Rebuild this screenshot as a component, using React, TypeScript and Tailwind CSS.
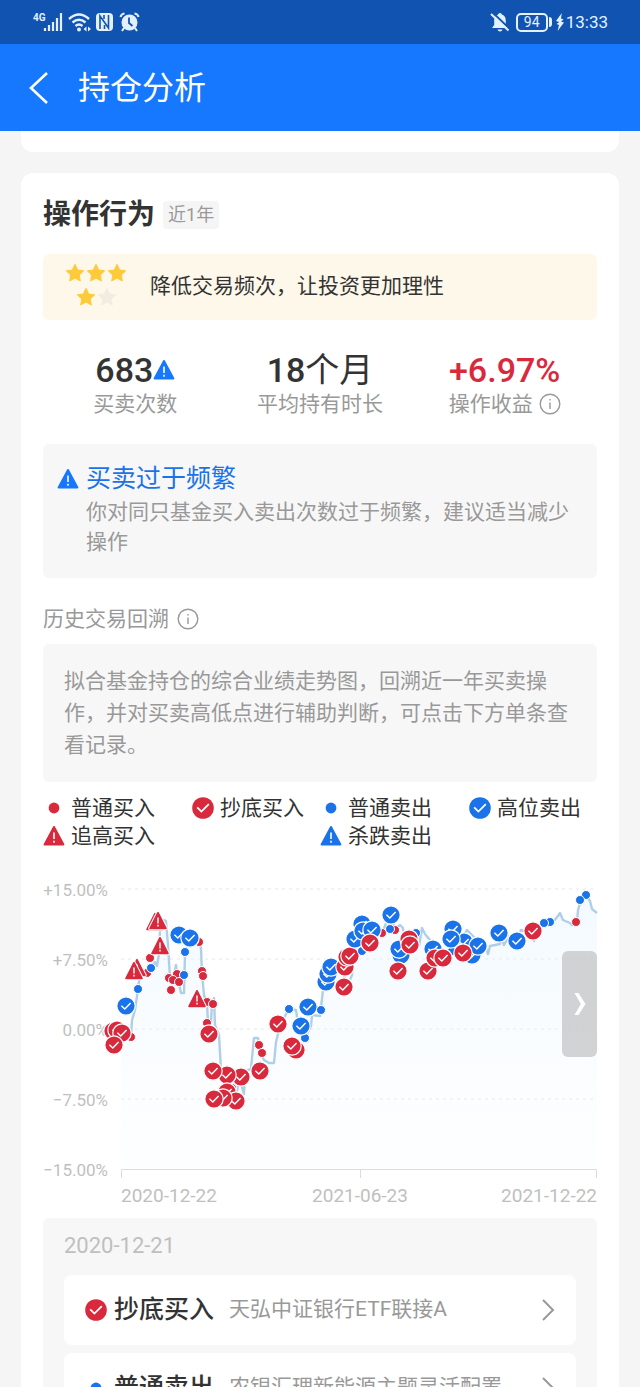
import { useState } from 'react';
import clsx from 'clsx';

type Kind = 'dot' | 'check' | 'warn';
type Side = 'buy' | 'sell';
type Mark = [Kind, Side, number, number];

const COLORS: Record<Side, string> = { buy: '#d9293d', sell: '#1a73e8' };

const legend: { kind: Kind; side: Side; label: string; className?: string }[] = [
  { kind: 'dot', side: 'buy', label: '普通买入' },
  { kind: 'check', side: 'buy', label: '抄底买入' },
  { kind: 'dot', side: 'sell', label: '普通卖出' },
  { kind: 'check', side: 'sell', label: '高位卖出' },
  { kind: 'warn', side: 'buy', label: '追高买入' },
  { kind: 'warn', side: 'sell', label: '杀跌卖出', className: 'col-start-3' },
];

const records: { kind: Kind; side: Side; label: string; fund: string }[] = [
  { kind: 'check', side: 'buy', label: '抄底买入', fund: '天弘中证银行ETF联接A' },
  { kind: 'dot', side: 'sell', label: '普通卖出', fund: '农银汇理新能源主题灵活配置' },
];

const yTicks = [
  { label: '+15.00%', y: 19 },
  { label: '+7.50%', y: 89 },
  { label: '0.00%', y: 159 },
  { label: '−7.50%', y: 229 },
  { label: '−15.00%', y: 299 },
];

const linePath =
  'M78 166 L88 166 L89 150 L92 140 L95 119 L97 104 L103 100 L108 98 L112 92 L114 96 L116 84 L117 60 L120 50 L123 51 L125 75 L127 108 L130 112 L133 95 L135 110 L138 123 L141 123 L142 82 L145 68 L155 70 L158 78 L159 104 L161 125 L164 134 L165 152 L168 153 L169 132 L171 128 L172 155 L176 165 L178 200 L186 206 L188 226 L193 228 L196 208 L201 224 L202 200 L206 200 L208 198 L211 168 L215 168 L218 184 L221 190 L226 193 L231 193 L233 172 L236 160 L242 146 L246 139 L253 140 L256 160 L262 168 L268 156 L269 145 L277 146 L280 120 L284 110 L290 95 L299 97 L304 117 L309 105 L312 69 L318 82 L324 60 L332 64 L339 63 L347 44 L352 59 L357 55 L360 58 L362 80 L367 64 L372 62 L376 76 L379 58 L382 64 L387 70 L392 82 L404 92 L411 58 L417 72 L424 60 L432 68 L436 78 L443 78 L445 84 L447 76 L457 74 L458 66 L461 75 L466 66 L474 72 L478 60 L486 62 L491 71 L497 60 L502 52 L510 52 L515 46 L517 43 L520 50 L527 53 L529 55 L534 52 L535 40 L538 30 L543 25 L547 31 L549 39 L554 43';

const marks: Mark[] = [
  ['dot', 'buy', 88, 167],
  ['check', 'buy', 70, 161],
  ['check', 'buy', 74, 160],
  ['check', 'buy', 79, 163],
  ['check', 'buy', 71, 175],
  ['check', 'sell', 83, 136],
  ['dot', 'sell', 95, 119],
  ['dot', 'buy', 104, 103],
  ['dot', 'buy', 107, 88],
  ['dot', 'sell', 108, 98],
  ['warn', 'buy', 94, 98],
  ['warn', 'buy', 91, 101],
  ['warn', 'buy', 117, 76],
  ['warn', 'buy', 112, 52],
  ['warn', 'buy', 115, 51],
  ['dot', 'buy', 156, 72],
  ['check', 'sell', 136, 65],
  ['check', 'sell', 147, 68],
  ['dot', 'sell', 142, 82],
  ['dot', 'buy', 126, 108],
  ['dot', 'buy', 134, 104],
  ['dot', 'buy', 130, 110],
  ['dot', 'buy', 136, 112],
  ['dot', 'buy', 128, 120],
  ['dot', 'sell', 141, 105],
  ['dot', 'buy', 159, 101],
  ['dot', 'buy', 160, 106],
  ['dot', 'buy', 164, 132],
  ['dot', 'buy', 170, 134],
  ['warn', 'buy', 154, 129],
  ['dot', 'buy', 164, 153],
  ['check', 'buy', 166, 164],
  ['check', 'buy', 198, 207],
  ['check', 'buy', 184, 205],
  ['check', 'buy', 170, 201],
  ['dot', 'buy', 189, 218],
  ['check', 'buy', 184, 222],
  ['check', 'buy', 193, 231],
  ['check', 'buy', 180, 228],
  ['check', 'buy', 171, 229],
  ['dot', 'buy', 216, 175],
  ['dot', 'buy', 219, 183],
  ['check', 'buy', 217, 201],
  ['check', 'buy', 235, 154],
  ['dot', 'sell', 246, 139],
  ['check', 'sell', 265, 137],
  ['dot', 'sell', 278, 140],
  ['dot', 'sell', 262, 168],
  ['check', 'sell', 258, 156],
  ['check', 'buy', 253, 180],
  ['check', 'buy', 249, 176],
  ['check', 'sell', 283, 112],
  ['check', 'sell', 285, 104],
  ['check', 'sell', 288, 97],
  ['check', 'buy', 301, 117],
  ['check', 'buy', 302, 97],
  ['check', 'buy', 304, 87],
  ['check', 'buy', 307, 86],
  ['dot', 'sell', 319, 81],
  ['check', 'sell', 312, 69],
  ['check', 'sell', 319, 54],
  ['check', 'sell', 320, 61],
  ['dot', 'buy', 339, 63],
  ['check', 'sell', 329, 60],
  ['check', 'buy', 327, 73],
  ['check', 'sell', 348, 45],
  ['dot', 'buy', 352, 60],
  ['dot', 'sell', 347, 59],
  ['dot', 'sell', 373, 63],
  ['check', 'sell', 358, 85],
  ['check', 'sell', 356, 79],
  ['check', 'buy', 366, 69],
  ['check', 'buy', 367, 75],
  ['check', 'buy', 355, 101],
  ['check', 'sell', 390, 79],
  ['dot', 'sell', 409, 81],
  ['check', 'buy', 385, 101],
  ['check', 'buy', 392, 88],
  ['check', 'buy', 400, 88],
  ['check', 'sell', 421, 72],
  ['check', 'sell', 410, 59],
  ['check', 'sell', 408, 69],
  ['check', 'sell', 429, 85],
  ['check', 'sell', 435, 76],
  ['check', 'buy', 420, 83],
  ['check', 'sell', 456, 63],
  ['check', 'sell', 474, 71],
  ['check', 'buy', 490, 61],
  ['dot', 'sell', 507, 52],
  ['dot', 'sell', 501, 53],
  ['dot', 'buy', 533, 52],
  ['dot', 'sell', 543, 25],
  ['dot', 'sell', 537, 30],
];

// chart markers, centred on 0,0
function Glyph({ kind, side }: { kind: Kind; side: Side }) {
  const fill = COLORS[side];
  if (kind === 'dot') return <circle r="4.5" fill={fill} stroke="#fff" strokeWidth="1" />;
  if (kind === 'check') {
    return (
      <>
        <circle r="9.2" fill={fill} stroke="#fff" strokeWidth="1.2" />
        <path d="M-4.6 -0.2 L-1.2 3 L4.6 -3" fill="none" stroke="#fff" strokeWidth="1.5" />
      </>
    );
  }
  return (
    <>
      <path d="M0 -8.4 L8 7.4 H-8 Z" fill={fill} stroke="#fff" strokeWidth="3.6" strokeLinejoin="round" />
      <path d="M0 -8.4 L8 7.4 H-8 Z" fill={fill} stroke={fill} strokeWidth="1.6" strokeLinejoin="round" />
      <path d="M0 -3.4 V2.4 M0 3.8 V5.4" stroke="#fff" strokeWidth="1.4" />
    </>
  );
}

function KindIcon({ kind, side }: { kind: Kind; side: Side }) {
  if (kind === 'dot') {
    return (
      <svg viewBox="-11 -11 22 22" className="size-[22px] shrink-0" aria-hidden="true">
        <circle r="5.4" fill={COLORS[side]} />
      </svg>
    );
  }
  if (kind === 'check') {
    return (
      <svg viewBox="-11 -11 22 22" className="size-[22px] shrink-0" aria-hidden="true">
        <circle r="10.8" fill={COLORS[side]} />
        <path d="M-5.8 -0.6 L-1.6 3.6 L5.8 -3.8" fill="none" stroke="#fff" strokeWidth="1.8" />
      </svg>
    );
  }
  return <WarnIcon color={COLORS[side]} />;
}

function WarnIcon({ color = '#1677ff' }: { color?: string }) {
  return (
    <svg viewBox="0 0 22 22" className="size-[22px] shrink-0" aria-hidden="true">
      <path d="M11 2 L20.4 19.4 H1.6 Z" fill={color} stroke={color} strokeWidth="2" strokeLinejoin="round" />
      <path d="M11 7.6 V14 M11 15.8 V17.8" stroke="#fff" strokeWidth="1.6" />
    </svg>
  );
}

function InfoIcon() {
  return (
    <svg viewBox="0 0 22 22" className="size-[22px]" fill="none" stroke="#999" strokeWidth="1.4" aria-hidden="true">
      <circle cx="11" cy="11" r="9.8" />
      <path d="M11 9.4 V16 M11 6 V7.6" />
    </svg>
  );
}

function Star({ on }: { on?: boolean }) {
  return (
    <svg viewBox="0 0 20 20" className="size-5" aria-hidden="true">
      <path
        d="M10 1.6 L12.6 7 L18.4 7.8 L14.2 11.9 L15.2 17.8 L10 15 L4.8 17.8 L5.8 11.9 L1.6 7.8 L7.4 7 Z"
        fill={on ? '#fdca3c' : '#f3ece0'}
        stroke={on ? '#fdca3c' : '#f3ece0'}
        strokeWidth="1.2"
        strokeLinejoin="round"
      />
    </svg>
  );
}

function Chevron() {
  return (
    <svg viewBox="0 0 14 22" className="h-[22px] w-3.5 shrink-0" fill="none" stroke="#999" strokeWidth="2" aria-hidden="true">
      <path d="M2 1 L12 11 L2 21" />
    </svg>
  );
}

function StatusBar() {
  return (
    <div className="flex h-11 shrink-0 items-center justify-between bg-[#1153b1] px-8 text-[#e3f1ff]">
      <svg viewBox="0 0 108 22" className="h-[22px] w-[108px]" fill="none" stroke="currentColor" aria-label="信号">
        <text x="1" y="10" fontSize="10" fontWeight="700" fill="currentColor" stroke="none">4G</text>
        <path d="M13 17 V20 M17 14 V20 M21 11 V20 M25 7 V20 M29 2 V20" strokeWidth="2.2" />
        <path d="M37 8 Q47 -1 57 8 M40.500 11.500 Q47 6 53.500 11.500 M43.500 15 Q47 12 50.500 15" strokeWidth="2.4" />
        <circle cx="47" cy="18.500" r="2" fill="currentColor" stroke="none" />
        <path d="M54.500 15.500 L51.500 18 L54.500 20.500 Z M56 15.500 L59 18 L56 20.500 Z" fill="currentColor" stroke="none" />
        <rect x="64" y="2" width="17" height="18" rx="4" fill="currentColor" stroke="none" />
        <path d="M68 18 V5 L76.500 17 V4 M72 4 V8 M72.500 14 V18" stroke="#1153b1" strokeWidth="1.6" />
        <circle cx="97.500" cy="11.500" r="8" fill="currentColor" stroke="none" />
        <path d="M88.500 6 Q89 3 92.500 2.500 M106.500 6 Q106 3 102.500 2.500 M92 17 L90 20 M103 17 L105 20" strokeWidth="2" />
        <path d="M97 6.500 V12 L100.500 15" stroke="#1153b1" strokeWidth="1.8" />
      </svg>
      <div className="flex items-center">
        <svg viewBox="0 0 20 20" className="size-5" aria-hidden="true">
          <path
            d="M10 1 C11.200 1 11.800 1.800 11.800 2.600 C15 3.600 15.800 6 15.800 9 V13 L18 16 H2 L4.200 13 V9 C4.200 6 5 3.600 8.200 2.600 C8.200 1.800 8.800 1 10 1 Z M7.500 17.500 H12.500 Q12 19.500 10 19.500 Q8 19.500 7.500 17.500 Z"
            fill="currentColor"
          />
          <path d="M2.500 0.500 L20 17" stroke="#1153b1" strokeWidth="2" />
          <path d="M1 2 L18.500 18.500" stroke="currentColor" strokeWidth="2" />
        </svg>
        <span className="ml-1.5 flex h-[19px] w-8 items-center justify-center rounded-[5px] border-2 border-current text-sm leading-none">
          94
        </span>
        <span className="ml-px h-2.5 w-[3px] rounded-r-sm bg-current" />
        <svg viewBox="0 0 8 18" className="ml-1 h-[18px] w-2" fill="currentColor" aria-hidden="true">
          <path d="M5.800 0 L0 8 L3.200 9 L0.600 11 L3 12 L1.600 18 L8 9.600 L5 8.600 L7.600 6.400 L5 5.600 Z" />
        </svg>
        <span className="ml-0.5 text-[17px] leading-none">13:33</span>
      </div>
    </div>
  );
}

function TradeChart() {
  return (
    <svg viewBox="0 0 554 342" className="block w-full overflow-visible" role="img" aria-label="历史交易回溯">
      <defs>
        <linearGradient id="area" x1="0" y1="0" x2="0" y2="1">
          <stop offset="0" stopColor="#e6f4ff" stopOpacity="0.5" />
          <stop offset="1" stopColor="#f0f8ff" stopOpacity="0.1" />
        </linearGradient>
      </defs>
      {yTicks.map((t) => (
        <g key={t.label}>
          <text x="65" y={t.y + 7} textAnchor="end" fontSize="17" fill="#bfbfbf">
            {t.label}
          </text>
          {t.y < 299 && <path d={`M78 ${t.y} H554`} stroke="#e6e6ea" strokeWidth="1" strokeDasharray="3 4" />}
        </g>
      ))}
      <path d={`${linePath} V299 H78 Z`} fill="url(#area)" />
      <path d="M78.500 308 V299.500 H553.500 V308 M317.500 299 V308" fill="none" stroke="#dcdce0" strokeWidth="1" />
      <path d={linePath} fill="none" stroke="#afcfe9" strokeWidth="2.4" strokeLinejoin="round" />
      {marks.map(([kind, side, x, y], i) => (
        <g key={i} transform={`translate(${x} ${y})`}>
          <Glyph kind={kind} side={side} />
        </g>
      ))}
      <g fontSize="19" fill="#bfbfbf">
        <text x="78" y="332">2020-12-22</text>
        <text x="317" y="332" textAnchor="middle">2021-06-23</text>
        <text x="554" y="332" textAnchor="end">2021-12-22</text>
      </g>
    </svg>
  );
}

export default function App() {
  const [selected, setSelected] = useState<number | null>(null);

  return (
    <div className="flex h-screen flex-col overflow-hidden bg-[#f5f5f5] font-[Roboto,'Noto_Sans_CJK_SC',sans-serif] text-[#333]">
      <StatusBar />
      <header className="flex h-[87px] shrink-0 items-center bg-[#1677ff] pl-7 text-white">
        <button type="button" aria-label="返回" className="cursor-pointer">
          <svg viewBox="0 0 22 32" className="h-8 w-[22px]" fill="none" stroke="currentColor" strokeWidth="2.6">
            <path d="M19 1 L3 16 L19 31" />
          </svg>
        </button>
        <h1 className="ml-7 text-[32px] leading-10">持仓分析</h1>
      </header>

      <main className="px-[21px]">
        <div className="h-[21px] rounded-b-xl bg-white" />

        <section className="mt-[21px] rounded-t-xl bg-white px-[22px] pt-[22px]">
          <div className="flex h-10 items-center gap-2">
            <h2 className="text-[28px] font-bold">操作行为</h2>
            <span className="rounded bg-[#f5f5f5] px-[5px] text-lg leading-7 text-[#999]">近1年</span>
          </div>

          <div className="mt-[19px] flex h-[66px] items-center rounded-md bg-[#fef8ea] pl-[21px]">
            <div className="flex w-16 flex-col items-center gap-1 pb-1">
              <div className="flex gap-px">
                <Star on />
                <Star on />
                <Star on />
              </div>
              <div className="flex gap-px">
                <Star on />
                <Star />
              </div>
            </div>
            <p className="ml-[22px] text-[21px]">降低交易频次，让投资更加理性</p>
          </div>

          <dl className="mt-[30px] grid grid-cols-3 text-center">
            <div className="flex flex-col-reverse">
              <dt className="text-[21px] leading-7 text-[#999]">买卖次数</dt>
              <dd className="flex items-center justify-center text-[34px] leading-10 font-medium">
                683
                <WarnIcon />
              </dd>
            </div>
            <div className="flex flex-col-reverse">
              <dt className="text-[21px] leading-7 text-[#999]">平均持有时长</dt>
              <dd className="text-[34px] leading-10">
                <span className="font-medium">18</span>个月
              </dd>
            </div>
            <div className="flex flex-col-reverse">
              <dt className="flex items-center justify-center gap-1.5 text-[21px] leading-7 text-[#999]">
                操作收益
                <InfoIcon />
              </dt>
              <dd className="text-[34px] leading-10 font-medium text-[#d9293d]">+6.97%</dd>
            </div>
          </dl>

          <div className="mt-[26px] flex items-start gap-[7px] rounded-md bg-[#f7f7f7] px-[14px] pt-[17px] pb-[21px]">
            <div className="flex h-9 items-center">
              <WarnIcon />
            </div>
            <div className="pr-[7px]">
              <h3 className="text-[25px] leading-9 text-[#1a73e8]">买卖过于频繁</h3>
              <p className="text-[21px] leading-[30px] text-[#999]">
                你对同只基金买入卖出次数过于频繁，建议适当减少操作
              </p>
            </div>
          </div>

          <h3 className="mt-[27px] flex items-center gap-2 text-[21px] leading-7 text-[#999]">
            历史交易回溯
            <InfoIcon />
          </h3>
          <p className="mt-[11px] rounded-md bg-[#f7f7f7] p-[21px] text-[21px] leading-8 text-[#999]">
            拟合基金持仓的综合业绩走势图，回溯近一年买卖操作，并对买卖高低点进行辅助判断，可点击下方单条查看记录。
          </p>

          <ul className="mt-3 grid grid-cols-[149fr_128fr_149fr_128fr] text-[21px] leading-7">
            {legend.map((item) => (
              <li key={item.label} className={clsx('flex items-center gap-1.5 whitespace-nowrap', item.className)}>
                <KindIcon kind={item.kind} side={item.side} />
                {item.label}
              </li>
            ))}
          </ul>

          <div className="relative mt-5">
            <TradeChart />
            <button
              type="button"
              aria-label="下一页"
              className="absolute top-[81px] right-0 flex h-[106px] w-[35px] cursor-pointer items-center justify-center rounded-md bg-[#c4c4c6]/75"
            >
              <svg viewBox="0 0 12 22" className="h-[22px] w-3" fill="#fff">
                <path d="M0.500 0 H4.500 L11.500 11 L4.500 22 H0.500 L6.800 11 Z" />
              </svg>
            </button>
          </div>

          <div className="mt-[6px] rounded-t-md bg-[#f7f7f7] px-[21px] pt-3">
            <p className="text-[22px] leading-8 text-[#bfbfbf]">2020-12-21</p>
            <div className="mt-[13px] space-y-2">
              {records.map((r, i) => (
                <button
                  key={r.label}
                  type="button"
                  onClick={() => setSelected(i)}
                  aria-pressed={selected === i}
                  className="flex h-[70px] w-full cursor-pointer items-center rounded-lg bg-white px-[21px] text-left"
                >
                  <KindIcon kind={r.kind} side={r.side} />
                  <span className="ml-[7px] text-[25px] font-medium whitespace-nowrap">{r.label}</span>
                  <span className="ml-[15px] flex-1 truncate text-[21px] text-[#999]">{r.fund}</span>
                  <Chevron />
                </button>
              ))}
            </div>
          </div>
        </section>
      </main>
    </div>
  );
}
